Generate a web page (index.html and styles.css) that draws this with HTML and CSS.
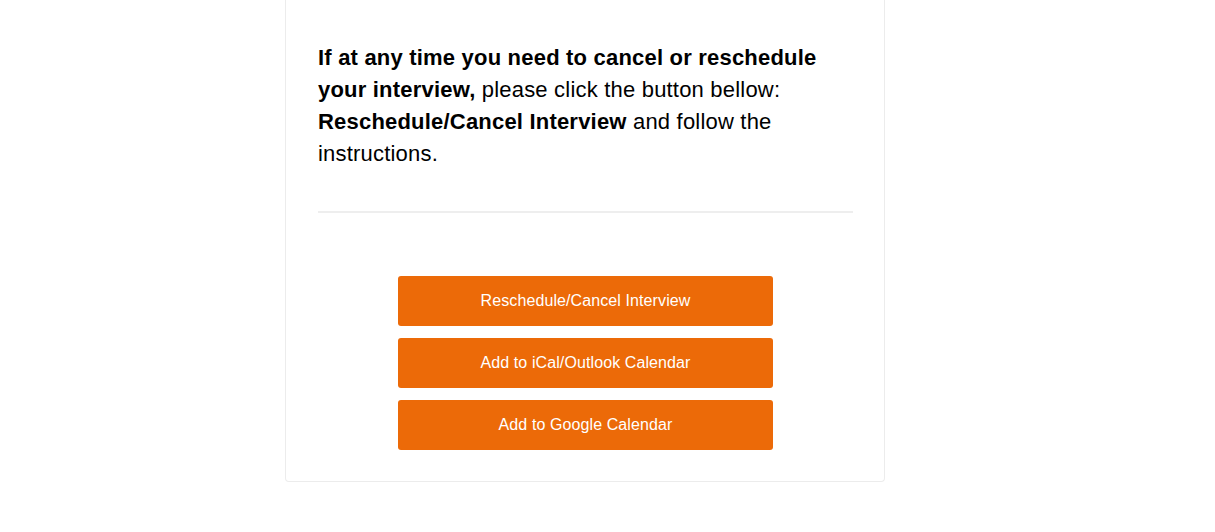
FILE: index.html
```html
<!DOCTYPE html>
<html>
<head>
<meta charset="utf-8">
<link rel="stylesheet" href="styles.css">
</head>
<body>
<div class="card">
  <p class="msg"><strong>If at any time you need to cancel or reschedule your interview,</strong> please click the button bellow: <strong>Reschedule/Cancel Interview</strong> and follow the instructions.</p>
  <hr class="divider">
  <div class="buttons">
    <a class="btn" href="#">Reschedule/Cancel Interview</a>
    <a class="btn" href="#">Add to iCal/Outlook Calendar</a>
    <a class="btn" href="#">Add to Google Calendar</a>
  </div>
</div>
</body>
</html>
```
FILE: styles.css
```css
html, body {
  margin: 0;
  padding: 0;
  background: #fff;
  font-family: "Liberation Sans", Arial, sans-serif;
}
.card {
  box-sizing: border-box;
  width: 600px;
  margin-left: 285px;
  border: 1px solid #ececec;
  border-top: none;
  border-radius: 0 0 4px 4px;
  padding: 42px 31px 31px 32px;
}
.msg {
  margin: 0;
  font-size: 22px;
  line-height: 32px;
  letter-spacing: 0.2px;
  color: #000;
}
.divider {
  border: none;
  height: 2px;
  background: #eeeeee;
  margin: 41px 0 63px;
}
.buttons {
  display: flex;
  flex-direction: column;
  align-items: center;
  gap: 12px;
}
.btn {
  display: flex;
  align-items: center;
  justify-content: center;
  width: 375px;
  height: 50px;
  background: #ec6a08;
  color: #fff;
  font-size: 16px;
  letter-spacing: 0.1px;
  text-decoration: none;
  border-radius: 3px;
}
```
